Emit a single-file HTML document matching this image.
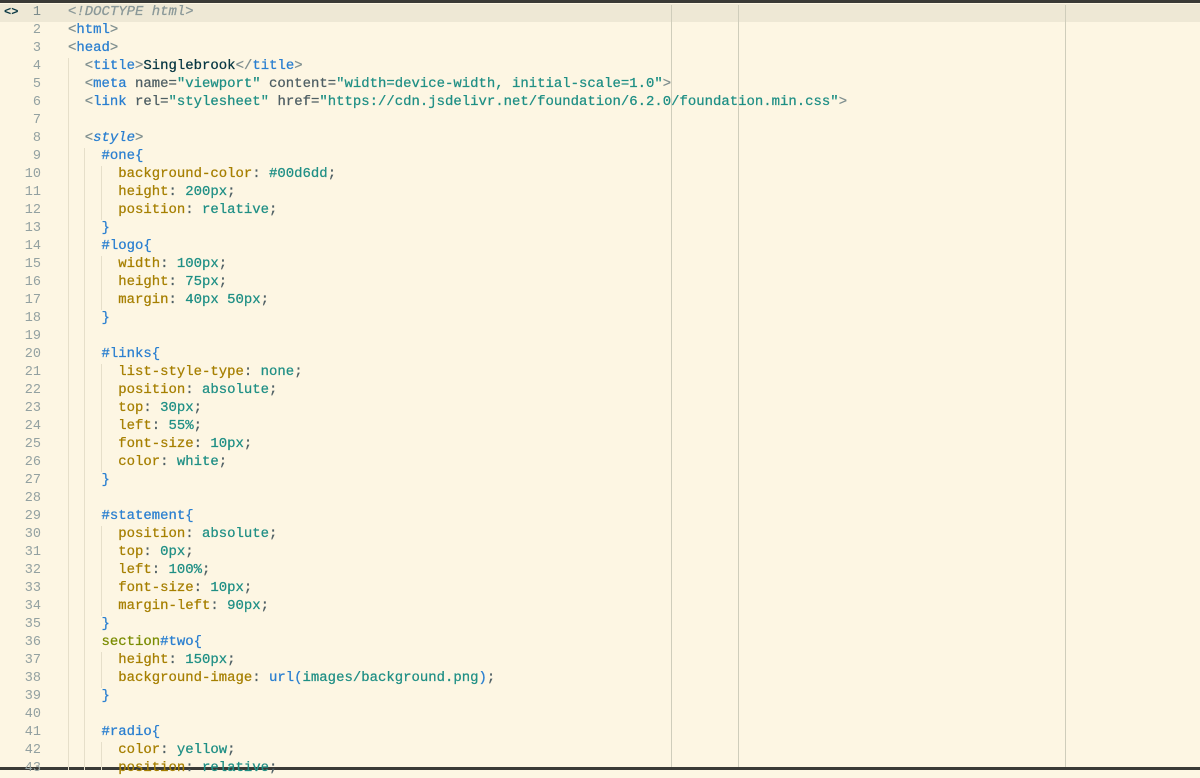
<!DOCTYPE html>
<html><head><meta charset="utf-8">
<style>
html,body{margin:0;padding:0;}
body{width:1200px;height:770px;background:#fdf6e3;position:relative;overflow:hidden;font-family:"Liberation Mono",monospace;font-size:13.5px;}
.top{position:absolute;left:0;top:0;width:1200px;height:3px;background:#3a3a36;}
.hl{position:absolute;left:0;top:4px;width:1200px;height:18px;background:#eee8d5;}
.bot{position:absolute;left:0;top:767px;width:1200px;height:3px;background:#3a3a36;}
.rule{position:absolute;top:5px;bottom:3px;width:1px;background:#cfcdbb;}
.guide{position:absolute;width:1px;background:#e6dfca;}
.ln{position:absolute;left:0;width:41px;text-align:right;color:#93a1a1;line-height:18px;}
.code{position:absolute;left:68px;white-space:pre;line-height:18px;color:#4f5f64;-webkit-text-stroke:0.25px currentColor;transform:scaleX(1.034);transform-origin:0 0;}
.t{color:#2a7fd0}.p{color:#7f8f8f}.s{color:#1f8f85}.k{color:#a67f00}.v{color:#1f8f85}.d{color:#073642}.g{color:#7a8c00}.c{color:#8a9898;font-style:italic}
.icon{position:absolute;left:4px;top:4px;color:#073642;font-weight:bold;font-size:12px;line-height:16px;}
</style></head><body>
<div class="top"></div>
<div class="hl"></div>
<div class="bot"></div>
<div class="rule" style="left:671px"></div>
<div class="rule" style="left:738px"></div>
<div class="rule" style="left:1065px"></div>
<div class="guide" style="left:68px;top:58px;height:712px"></div>
<div class="guide" style="left:84px;top:148px;height:622px"></div>
<div class="guide" style="left:101px;top:166px;height:54px"></div>
<div class="guide" style="left:101px;top:256px;height:54px"></div>
<div class="guide" style="left:101px;top:364px;height:108px"></div>
<div class="guide" style="left:101px;top:526px;height:90px"></div>
<div class="guide" style="left:101px;top:652px;height:36px"></div>
<div class="guide" style="left:101px;top:742px;height:28px"></div>
<div class="icon">&lt;&gt;</div>
<div id="lines"></div>
<script>
var L=[
'<span class="c">&lt;!DOCTYPE html&gt;</span>',
'<span class="p">&lt;</span><span class="t">html</span><span class="p">&gt;</span>',
'<span class="p">&lt;</span><span class="t">head</span><span class="p">&gt;</span>',
'  <span class="p">&lt;</span><span class="t">title</span><span class="p">&gt;</span><span class="d">Singlebrook</span><span class="p">&lt;/</span><span class="t">title</span><span class="p">&gt;</span>',
'  <span class="p">&lt;</span><span class="t">meta</span> name=<span class="s">"viewport"</span> content=<span class="s">"width=device-width, initial-scale=1.0"</span><span class="p">&gt;</span>',
'  <span class="p">&lt;</span><span class="t">link</span> rel=<span class="s">"stylesheet"</span> href=<span class="s">"https://cdn.jsdelivr.net/foundation/6.2.0/foundation.min.css"</span><span class="p">&gt;</span>',
'',
'  <span class="p">&lt;</span><span class="t" style="font-style:italic">style</span><span class="p">&gt;</span>',
'    <span class="t">#one{</span>',
'      <span class="k">background-color</span>: <span class="v">#00d6dd</span>;',
'      <span class="k">height</span>: <span class="v">200px</span>;',
'      <span class="k">position</span>: <span class="v">relative</span>;',
'    <span class="t">}</span>',
'    <span class="t">#logo{</span>',
'      <span class="k">width</span>: <span class="v">100px</span>;',
'      <span class="k">height</span>: <span class="v">75px</span>;',
'      <span class="k">margin</span>: <span class="v">40px 50px</span>;',
'    <span class="t">}</span>',
'',
'    <span class="t">#links{</span>',
'      <span class="k">list-style-type</span>: <span class="v">none</span>;',
'      <span class="k">position</span>: <span class="v">absolute</span>;',
'      <span class="k">top</span>: <span class="v">30px</span>;',
'      <span class="k">left</span>: <span class="v">55%</span>;',
'      <span class="k">font-size</span>: <span class="v">10px</span>;',
'      <span class="k">color</span>: <span class="v">white</span>;',
'    <span class="t">}</span>',
'',
'    <span class="t">#statement{</span>',
'      <span class="k">position</span>: <span class="v">absolute</span>;',
'      <span class="k">top</span>: <span class="v">0px</span>;',
'      <span class="k">left</span>: <span class="v">100%</span>;',
'      <span class="k">font-size</span>: <span class="v">10px</span>;',
'      <span class="k">margin-left</span>: <span class="v">90px</span>;',
'    <span class="t">}</span>',
'    <span class="g">section</span><span class="t">#two{</span>',
'      <span class="k">height</span>: <span class="v">150px</span>;',
'      <span class="k">background-image</span>: <span class="t">url(</span><span class="v">images/background.png</span><span class="t">)</span>;',
'    <span class="t">}</span>',
'',
'    <span class="t">#radio{</span>',
'      <span class="k">color</span>: <span class="v">yellow</span>;',
'      <span class="k">position</span>: <span class="v">relative</span>;'
];
var h='';
for(var i=0;i<L.length;i++){
 var y=4+i*18;
 h+='<div class="ln" style="top:'+y+'px'+(i==0?';color:#7c8c8c':'')+'">'+(i+1)+'</div>';
 h+='<div class="code" style="top:'+y+'px">'+L[i]+'</div>';
}
document.getElementById('lines').innerHTML=h;
</script>
</body></html>
